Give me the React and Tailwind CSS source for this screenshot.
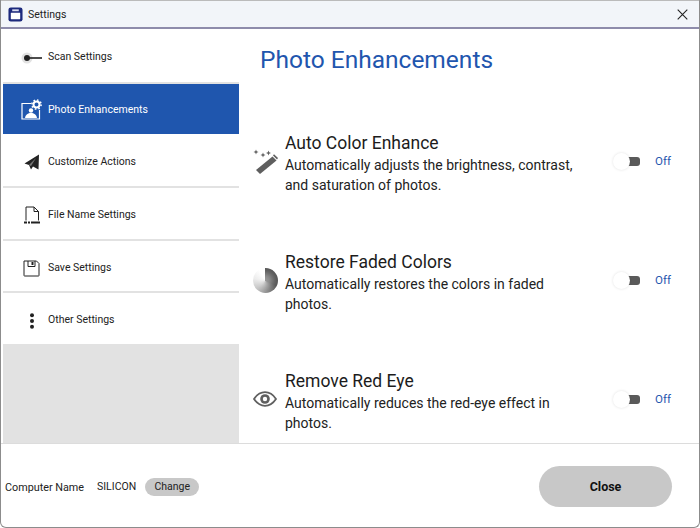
const font = { fontFamily: 'Roboto, "Noto Sans", sans-serif' };

function Scan() {
  return (
    <svg width="24" height="16" viewBox="0 0 24 16">
      <circle cx="7" cy="8" r="5.5" fill="#e2e2e2" />
      <circle cx="7" cy="8" r="3" fill="#222" />
      <rect x="7" y="7.2" width="15" height="1.6" fill="#222" />
    </svg>
  );
}
function PhotoIcon() {
  return (
    <svg width="22" height="22" viewBox="0 0 22 22" fill="none">
      <path d="M10 4.5H1V20H18.5V11" stroke="#fff" strokeWidth="1.2" />
      <circle cx="10" cy="11.5" r="2.2" fill="#fff" />
      <path d="M4 19c.5-3.5 3-5 6-5s5.5 1.5 6 5z" fill="#fff" />
      <circle cx="15.5" cy="5.5" r="3" stroke="#fff" strokeWidth="2" />
      <circle cx="15.5" cy="5.5" r="4.6" stroke="#fff" strokeWidth="1.6" strokeDasharray="1.6 2" />
    </svg>
  );
}
function Plane() {
  return (
    <svg width="16" height="16" viewBox="0 0 16 16">
      <path d="M15 0.5 0.5 9.5 5 11 7 15.5 9 12.5 14.5 15.5z" fill="#222" />
      <path d="M5 11 12 4 7 12z" fill="#777" />
    </svg>
  );
}
function FileIcon() {
  return (
    <svg width="18" height="20" viewBox="0 0 18 20" fill="none">
      <path d="M3 14.5V1H11L15.5 5.5V14.5" stroke="#222" strokeWidth="1" />
      <path d="M11 1V5.5H15.5" stroke="#222" strokeWidth="1" />
      <path d="M1 16.5H4M5 16.5H7M8 16.5H17" stroke="#222" strokeWidth="2" />
    </svg>
  );
}
function SaveIcon() {
  return (
    <svg width="17" height="17" viewBox="0 0 17 17" fill="none">
      <path d="M1 1H13.5L16 3.5V15.5A.5.5 0 0 1 15.5 16H1.5A.5.5 0 0 1 1 15.5Z" stroke="#222" strokeWidth="1" />
      <path d="M5 1V6.5H12V1" stroke="#222" strokeWidth="1" />
      <rect x="8.5" y="2" width="2" height="3" fill="#222" />
    </svg>
  );
}
function Dots() {
  return (
    <svg width="6" height="16" viewBox="0 0 6 16">
      <circle cx="3" cy="2.2" r="2" fill="#222" />
      <circle cx="3" cy="8" r="2" fill="#222" />
      <circle cx="3" cy="13.8" r="2" fill="#222" />
    </svg>
  );
}
function Wand() {
  return (
    <svg width="26" height="26" viewBox="0 0 26 26">
      <path d="M19.5 8.5 23.5 12.5 7 26 3 22z" fill="#5f5f5f" />
      <path d="M21 6.2 25 10 24 11.4 20 7.6z" fill="#5f5f5f" />
      <path d="M3 1.5 3.7 3.3 5.5 4 3.7 4.7 3 6.5 2.3 4.7.5 4 2.3 3.3zM10 4.5 10.7 6.3 12.5 7 10.7 7.7 10 9.5 9.3 7.7 7.5 7 9.3 6.3zM15.5 2.5 16.2 4.3 18 5 16.2 5.7 15.5 7.5 14.8 5.7 13 5 14.8 4.3z" fill="#5f5f5f" />
    </svg>
  );
}
function Faded() {
  return (
    <div className="relative w-[25px] h-[25px] rounded-full bg-[conic-gradient(#555_0deg,#555_115deg,#8a8a8a_170deg,#c4c4c4_225deg,#ececec_280deg,#ffffff_330deg,#ffffff_360deg)]">
      <div className="absolute inset-[5px] rounded-full bg-white/40 blur-[3px]" />
    </div>
  );
}
function Eye() {
  return (
    <svg width="24" height="16" viewBox="0 0 24 16" fill="none">
      <path d="M1 8C4 3.5 8 1.2 12 1.2S20 3.5 23 8C20 12.5 16 14.8 12 14.8S4 12.5 1 8Z" stroke="#5f5f5f" strokeWidth="1.8" />
      <circle cx="12" cy="8" r="4.8" fill="#5f5f5f" />
      <circle cx="12" cy="8" r="2.2" fill="#fff" />
    </svg>
  );
}
function AppIcon() {
  return (
    <svg width="15" height="15" viewBox="0 0 16 16">
      <rect x="0.5" y="0.5" width="15" height="15" rx="2.5" fill="#1d2a7d" />
      <rect x="3" y="6" width="10" height="7" rx="0.5" fill="#fff" />
      <rect x="4.5" y="2.5" width="7" height="2" fill="#d9dcf0" />
    </svg>
  );
}

function NavItem({ icon, label, active, h }) {
  return (
    <div className={`flex items-center shrink-0 ${h} ${active ? "bg-[#1f56ae] text-white pt-[2px]" : "bg-white text-[#222] border-b-2 border-[#e2e2e2] pt-[4px]"}`}>
      <div className="w-[45px] pl-[16px] pr-[4px] flex items-center justify-center shrink-0">{icon}</div>
      <span className="text-[10.5px] leading-none">{label}</span>
    </div>
  );
}

function Row({ icon, title, lines, h }) {
  return (
    <div className={`flex items-start ${h}`}>
      <div className="w-[46px] h-[60px] shrink-0 flex items-center pl-[14px]">{icon}</div>
      <div className="w-[328px] shrink-0">
        <div className="text-[17.5px] leading-[25px] text-[#1c1c1c]">{title}</div>
        {lines.map((l) => (
          <div key={l} className="text-[14px] leading-[19.5px] text-[#222]">{l}</div>
        ))}
      </div>
      <div className="flex items-center mt-[25px]">
        <div className="relative w-[27px] h-[9px]">
          <div className="absolute right-0 top-0 w-[18px] h-[9px] rounded-r-[3px] bg-[#5a5a5a]" />
          <div className="absolute left-0 top-[-4px] w-[17px] h-[17px] rounded-full bg-white shadow-[0_0_3px_rgba(0,0,0,0.12)]" />
        </div>
        <span className="ml-[15px] text-[11.5px] leading-none text-[#1f56ae]">Off</span>
      </div>
    </div>
  );
}

export default function App() {
  return (
    <div style={font} className="w-[700px] h-[528px] bg-white flex flex-col border-x border-b border-[#8c8c8c] rounded-b-[6px] overflow-hidden">
      <div className="h-[29px] shrink-0 flex items-center bg-[#f2f5f9] border-b-2 border-t border-t-[#bbb] border-b-[#8e8cab] pl-[7px] pr-[11px]">
        <AppIcon />
        <span className="ml-[5px] pt-[1px] text-[10.5px] text-[#222]">Settings</span>
        <svg className="ml-auto" width="11" height="11" viewBox="0 0 11 11" fill="none">
          <path d="M.7.7 10.3 10.3M10.3.7.7 10.3" stroke="#222" strokeWidth="1.1" />
        </svg>
      </div>
      <div className="flex h-[415px] shrink-0 border-b border-[#dcdcdc]">
        <div className="w-[236px] shrink-0 ml-[2px] bg-[#e2e2e2] flex flex-col">
          <NavItem h="h-[55px]" icon={<Scan />} label="Scan Settings" />
          <NavItem h="h-[50px]" active icon={<PhotoIcon />} label="Photo Enhancements" />
          <NavItem h="h-[54px]" icon={<Plane />} label="Customize Actions" />
          <NavItem h="h-[53px]" icon={<FileIcon />} label="File Name Settings" />
          <NavItem h="h-[52px]" icon={<SaveIcon />} label="Save Settings" />
          <NavItem h="h-[53px]" icon={<Dots />} label="Other Settings" />
        </div>
        <div className="flex-1 min-w-0 overflow-hidden">
          <div className="pl-[21px] pt-[13px] h-[102px] text-[24.5px] leading-[36px] text-[#1f56ae]">Photo Enhancements</div>
          <Row h="h-[119px]" icon={<Wand />} title="Auto Color Enhance" lines={["Automatically adjusts the brightness, contrast,", "and saturation of photos."]} />
          <Row h="h-[119px]" icon={<Faded />} title="Restore Faded Colors" lines={["Automatically restores the colors in faded", "photos."]} />
          <Row h="h-[72px]" icon={<Eye />} title="Remove Red Eye" lines={["Automatically reduces the red-eye effect in", "photos."]} />
        </div>
      </div>
      <div className="flex-1 flex items-center pl-[4px] pr-[27px] pt-[2px]">
        <span className="pt-[3px] text-[10.8px] text-[#222]">Computer Name</span>
        <span className="ml-[13px] text-[10.5px] text-[#222]">SILICON</span>
        <span className="ml-[9px] h-[18px] w-[54px] rounded-full bg-[#c8c8c8] text-[10.5px] text-[#222] flex items-center justify-center">Change</span>
        <span className="ml-auto h-[41px] w-[133px] pt-[2px] rounded-full bg-[#c8c8c8] text-[12.5px] font-bold text-[#111] flex items-center justify-center">Close</span>
      </div>
    </div>
  );
}
